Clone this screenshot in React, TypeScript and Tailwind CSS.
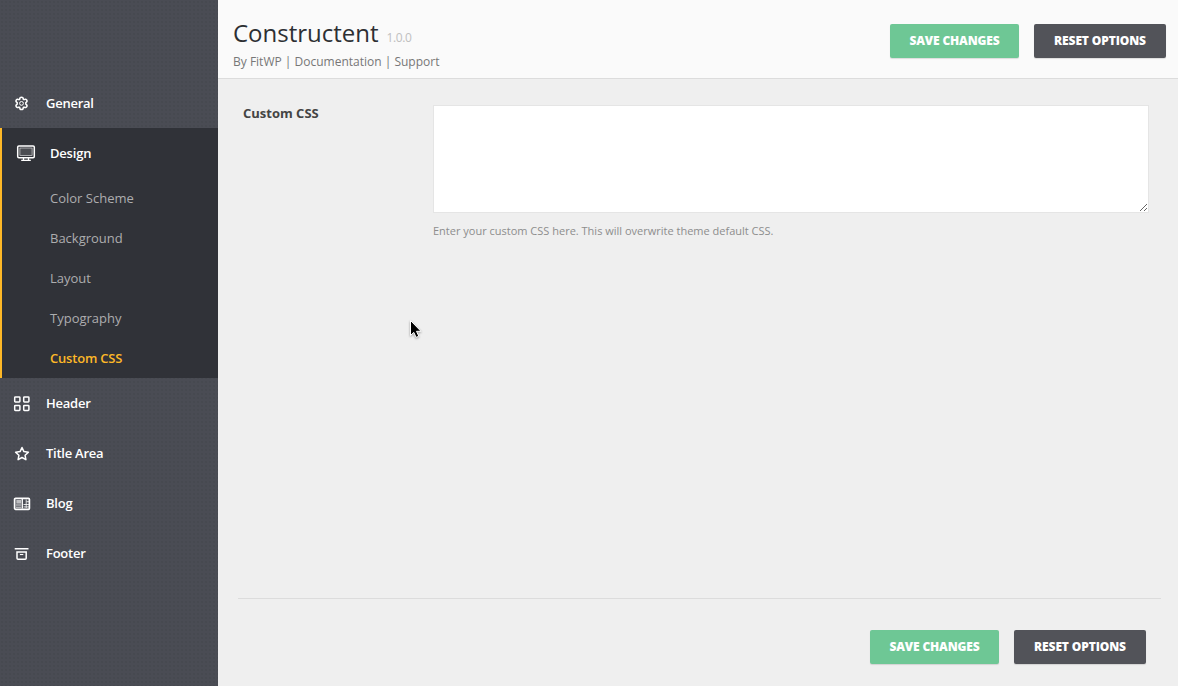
import React from 'react';

function GearIcon() {
  return (
    <svg width="16" height="16" viewBox="0 0 16 16" fill="none" stroke="white" strokeWidth="1.5" strokeLinejoin="round">
      <path d="M5.700 3.300C5.700 1.700 6.500 1.200 7.500 1.200S9.300 1.700 9.300 3.300L10 3.700c1.400-.8 2.300-.5 2.800.4.500.9.300 1.700-1 2.500v1.600c1.300.8 1.500 1.600 1 2.500-.5.9-1.400 1.200-2.800.4l-.7.400c0 1.600-.8 2.100-1.800 2.100s-1.800-.5-1.800-2.100L5 11.100c-1.400.8-2.300.5-2.800-.4-.5-.9-.3-1.700 1-2.500V6.600c-1.300-.8-1.500-1.600-1-2.500.5-.9 1.400-1.200 2.800-.4z" />
      <circle cx="7.500" cy="7.400" r="1.900" strokeWidth="1" />
    </svg>
  );
}

function MonitorIcon() {
  return (
    <svg width="20" height="18" viewBox="0 0 20 18" fill="none" stroke="white">
      <rect x="1.700" y="1.900" width="16.600" height="11.800" rx="1.200" strokeWidth="1.500" />
      <rect x="3.900" y="4" width="12.200" height="7.500" fill="#4b4d52" strokeWidth=".7" strokeOpacity=".8" />
      <path d="M7.500 14v2M12.500 14v2M5.200 16.300h9.600" strokeWidth="1.300" />
    </svg>
  );
}

function GridIcon() {
  return (
    <svg width="18" height="18" viewBox="0 0 18 18" fill="none" stroke="white" strokeWidth="1.500">
      <rect x="1.700" y="1.900" width="5.200" height="5" rx=".7" />
      <rect x="10.700" y="1.900" width="5.200" height="5" rx=".7" />
      <rect x="1.700" y="10.400" width="5.200" height="5" rx=".7" />
      <rect x="10.700" y="10.400" width="5.200" height="5" rx=".7" />
    </svg>
  );
}

function StarIcon() {
  return (
    <svg width="16" height="16" viewBox="0 0 16 16" fill="none" stroke="white" strokeWidth="1.500" strokeLinejoin="round">
      <path d="M8 1.500l1.900 4.100 4.500.6-3.300 3.100.8 4.400L8 11.500l-3.900 2.200.8-4.400-3.300-3.100 4.500-.6z" />
    </svg>
  );
}

function NewsIcon() {
  return (
    <svg width="18" height="14" viewBox="0 0 18 14" fill="none" stroke="white">
      <rect x="1.600" y="1.300" width="14.800" height="11" rx="1" strokeWidth="1.700" />
      <rect x="3.300" y="3" width="4.900" height="3.600" fill="white" fillOpacity=".65" stroke="none" />
      <path d="M3 8h5.200M3 10.200h5.200" strokeWidth="1" strokeOpacity=".85" />
      <path d="M9.300 2v9.500" strokeWidth="1.300" />
      <path d="M10.500 7.500h5.500M10.500 9.900h5.500M13.200 2.500v8.500M13.500 4.700h2.500" strokeWidth="1" strokeOpacity=".8" />
    </svg>
  );
}

function ArchiveIcon() {
  return (
    <svg width="16" height="14" viewBox="0 0 16 14" fill="none" stroke="white" strokeWidth="1.500">
      <path d="M.700 1.700h13.800M3 4.900h9.200v6.300q0 1-1 1H4q-1 0-1-1z" />
      <path d="M5.900 7.500h3.400" strokeWidth="1.100" />
    </svg>
  );
}

function NavItem({ icon, label }: { icon: React.ReactNode; label: string }) {
  return (
    <a className="flex h-[50px] items-center pl-3 font-semibold text-white">
      <span className="mr-[14px] flex w-5 justify-center pt-0.5">{icon}</span>
      <span className="pt-0.5 tracking-[-0.25px]">{label}</span>
    </a>
  );
}

const designItems = ['Color Scheme', 'Background', 'Layout', 'Typography', 'Custom CSS'];

function Buttons() {
  return (
    <div className="flex gap-[15px] text-[12px] font-extrabold text-white [text-shadow:0_1px_1px_rgba(0,0,0,.15)]">
      <button className="h-[34px] w-[129px] rounded-[2px] bg-[#6ec795] pb-px tracking-[-0.15px] shadow-[0_1px_1px_rgba(0,0,0,.12)]">SAVE CHANGES</button>
      <button className="h-[34px] w-[132px] rounded-[2px] bg-[#525359] pb-px tracking-[-0.12px] shadow-[0_1px_1px_rgba(0,0,0,.12)]">RESET OPTIONS</button>
    </div>
  );
}

export default function App() {
  return (
    <div className="relative flex h-[686px] w-[1178px] overflow-hidden bg-[#efefef] font-['Open_Sans',sans-serif] text-[13px]">
      <aside className="w-[218px] shrink-0 bg-[#4a4c54] bg-[radial-gradient(circle_at_center,#464950_0.7px,transparent_1px)] bg-[size:4px_4px] pt-[78px]">
        <NavItem icon={<GearIcon />} label="General" />
        <div className="h-[250px] border-l-2 border-[#fdb827] bg-[#303238]">
          <a className="flex h-[50px] items-center pl-[14px] font-semibold text-white">
            <span className="mr-[14px] w-5">
              <MonitorIcon />
            </span>
            <span className="pt-0.5 tracking-[-0.2px]">Design</span>
          </a>
          {designItems.map((item) => (
            <a
              key={item}
              className={
                item === 'Custom CSS'
                  ? 'flex h-10 items-center pl-12 pt-0.5 font-semibold tracking-[-0.2px] text-[#fdb827]'
                  : 'flex h-10 items-center pl-12 pt-0.5 text-[#adadaf]'
              }
            >
              {item}
            </a>
          ))}
        </div>
        <NavItem icon={<GridIcon />} label="Header" />
        <NavItem icon={<StarIcon />} label="Title Area" />
        <NavItem icon={<NewsIcon />} label="Blog" />
        <NavItem icon={<ArchiveIcon />} label="Footer" />
      </aside>
      <main className="flex min-w-0 flex-1 flex-col">
        <header className="flex h-[79px] shrink-0 justify-between border-b border-[#dcdcdc] bg-[#fafafa] pl-[15px] pr-3">
          <div>
            <h1 className="mt-4 flex h-[34px] items-baseline text-[24px] leading-[34px] text-[#2d2f33]">
              Constructent<span className="ml-2 text-[12px] tracking-[-0.4px] text-[#c0c0c0]">1.0.0</span>
            </h1>
            <p className="mt-[3px] text-[12px] leading-[18px] text-[#777]">By FitWP | Documentation | Support</p>
          </div>
          <div className="pt-6">
            <Buttons />
          </div>
        </header>
        <section className="flex flex-1 pl-[25px] pt-[26px]">
          <label className="w-[190px] text-[13px] leading-4 font-bold text-[#444]">Custom CSS</label>
          <div>
            <textarea className="block h-[108px] w-[716px] resize border border-[#e5e5e5] bg-white outline-none" />
            <p className="mt-[10px] text-[11px] leading-4 text-[#8d8d8d]">Enter your custom CSS here. This will overwrite theme default CSS.</p>
          </div>
        </section>
        <footer className="ml-5 mr-[17px] flex h-[88px] shrink-0 justify-end border-t border-[#dcdcdc] pr-[15px] pt-[31px]">
          <Buttons />
        </footer>
      </main>
      <svg className="absolute left-[408px] top-[319px] drop-shadow-[0_1px_1px_rgba(0,0,0,.35)]" width="16" height="22" viewBox="0 0 16 22">
        <path d="M2.500 1.500v15l3.300-3.100 2.300 5 2.700-1.200-2.300-4.900h4.500z" fill="black" stroke="white" strokeWidth="1" />
      </svg>
    </div>
  );
}
